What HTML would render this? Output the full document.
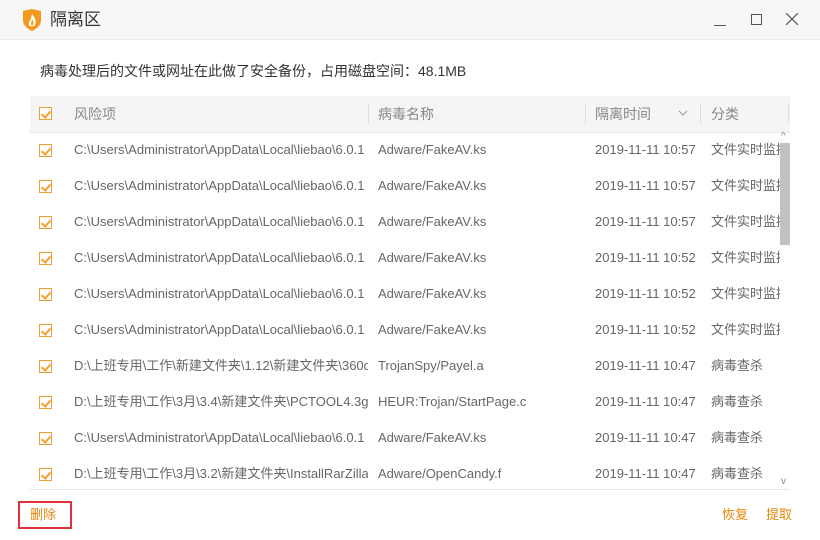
<!DOCTYPE html>
<html><head><meta charset="utf-8"><style>
body{margin:0;width:820px;height:540px;background:#fff;font-family:"Liberation Sans","Noto Sans CJK SC",sans-serif;position:relative;overflow:hidden;color:#666}
.tb{position:absolute;left:0;top:0;width:820px;height:39px;background:#f7f7f7;border-bottom:1px solid #ebebeb}
.title{position:absolute;left:50px;top:10px;font-size:17px;line-height:20px;color:#333}
.desc{position:absolute;left:40px;top:62px;font-size:14px;line-height:18px;color:#333}
.hdr{position:absolute;left:30px;top:96px;width:760px;height:36px;background:#f5f5f5;border-bottom:1px solid #e8e8e8}
.t{position:absolute;font-size:13px;line-height:16px;height:16px;white-space:nowrap;overflow:hidden}
.cb{position:absolute;left:39px;width:13px;height:13px;border:1px solid #f0a030;background:#fff;box-sizing:border-box}
.cb:after{content:"";position:absolute;left:3px;top:1px;width:4px;height:7px;border:solid #f0a030;border-width:0 2px 2px 0;transform:rotate(40deg)}
.sep{position:absolute;top:104px;width:1px;height:20px;background:#ddd}
.o{position:absolute;font-size:13px;line-height:16px;color:#e8860c}
</style></head><body>
<div class="tb">
<svg style="position:absolute;left:22px;top:9px" width="20" height="22" viewBox="0 0 20 22"><path d="M1 2 L10 0 L19 2 L19 11 C19 17 14 20 10 22 C6 20 1 17 1 11Z" fill="#f39a1e"/><path d="M10 5 C13 9 15 12 13 16 C12 18 8 18 7 16 C6 13 9 12 10 5Z" fill="#fff"/><path d="M10 10 C11 12 12 14 11 16 C10 17 9 16 9 15Z" fill="#f39a1e"/></svg>
<div class="title">隔离区</div>
<div style="position:absolute;left:714px;top:25px;width:12px;height:1px;background:#555"></div>
<div style="position:absolute;left:751px;top:14px;width:9px;height:9px;border:1px solid #555"></div>
<svg style="position:absolute;left:786px;top:13px" width="12" height="12"><path d="M0 0L12 12M12 0L0 12" stroke="#555" stroke-width="1.2"/></svg>
</div>
<div class="desc">病毒处理后的文件或网址在此做了安全备份，占用磁盘空间：48.1MB</div>
<div class="hdr"></div>
<div class="cb" style="top:107px"></div>
<div class="t" style="left:74px;top:106px;font-size:14px;color:#888">风险项</div>
<div class="sep" style="left:368px"></div>
<div class="t" style="left:378px;top:106px;font-size:14px;color:#888">病毒名称</div>
<div class="sep" style="left:585px"></div>
<div class="t" style="left:595px;top:106px;font-size:14px;color:#888">隔离时间</div>
<svg style="position:absolute;left:678px;top:110px" width="10" height="7"><path d="M1 1L5 5L9 1" stroke="#999" fill="none"/></svg>
<div class="sep" style="left:700px"></div>
<div class="t" style="left:711px;top:106px;font-size:14px;color:#888">分类</div>
<div class="sep" style="left:788px"></div>
<div id="rows"></div>
<div style="position:absolute;left:30px;top:489px;width:760px;height:1px;background:#e8e8e8"></div>
<div style="position:absolute;left:780px;top:143px;width:10px;height:102px;background:#c2c2c2"></div>
<div style="position:absolute;left:781px;top:131px;font-size:10px;color:#888">^</div>
<div style="position:absolute;left:781px;top:476px;font-size:10px;color:#888">v</div>
<div style="position:absolute;left:18px;top:501px;width:50px;height:24px;border:2px solid #e0303a"></div>
<div class="o" style="left:30px;top:507px">删除</div>
<div class="o" style="left:722px;top:507px">恢复</div>
<div class="o" style="left:766px;top:507px">提取</div>
<script>
var d=[["C:\\Users\\Administrator\\AppData\\Local\\liebao\\6.0.1","Adware/FakeAV.ks","10:57","文件实时监控"],
["C:\\Users\\Administrator\\AppData\\Local\\liebao\\6.0.1","Adware/FakeAV.ks","10:57","文件实时监控"],
["C:\\Users\\Administrator\\AppData\\Local\\liebao\\6.0.1","Adware/FakeAV.ks","10:57","文件实时监控"],
["C:\\Users\\Administrator\\AppData\\Local\\liebao\\6.0.1","Adware/FakeAV.ks","10:52","文件实时监控"],
["C:\\Users\\Administrator\\AppData\\Local\\liebao\\6.0.1","Adware/FakeAV.ks","10:52","文件实时监控"],
["C:\\Users\\Administrator\\AppData\\Local\\liebao\\6.0.1","Adware/FakeAV.ks","10:52","文件实时监控"],
["D:\\上班专用\\工作\\新建文件夹\\1.12\\新建文件夹\\360qn","TrojanSpy/Payel.a","10:47","病毒查杀"],
["D:\\上班专用\\工作\\3月\\3.4\\新建文件夹\\PCTOOL4.3gez","HEUR:Trojan/StartPage.c","10:47","病毒查杀"],
["C:\\Users\\Administrator\\AppData\\Local\\liebao\\6.0.1","Adware/FakeAV.ks","10:47","病毒查杀"],
["D:\\上班专用\\工作\\3月\\3.2\\新建文件夹\\InstallRarZilla_V","Adware/OpenCandy.f","10:47","病毒查杀"]];
var h="";d.forEach(function(r,i){var y=132+i*36;
h+='<div class="cb" style="top:'+(y+12)+'px"></div><div class="t" style="left:74px;top:'+(y+10)+'px;width:294px">'+r[0]+'</div><div class="t" style="left:378px;top:'+(y+10)+'px;width:200px">'+r[1]+'</div><div class="t" style="left:595px;top:'+(y+10)+'px">2019-11-11 '+r[2]+'</div><div class="t" style="left:711px;top:'+(y+10)+'px;width:69px">'+r[3]+'</div>';});
document.getElementById("rows").innerHTML=h;
</script>
</body></html>
